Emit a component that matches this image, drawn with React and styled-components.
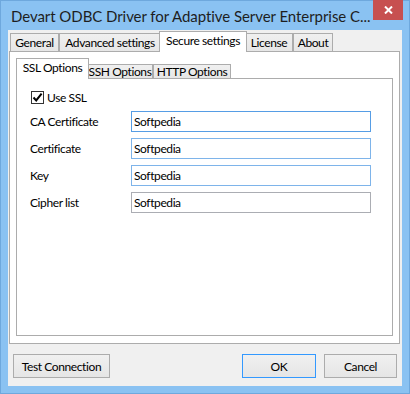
import React from 'react';
import styled, { createGlobalStyle, css } from 'styled-components';

const UI_FONT = `Lato, 'Noto Sans', sans-serif`;

const GlobalStyle = createGlobalStyle`
  html, body {
    margin: 0;
    padding: 0;
    background: #ffffff;
  }
  body {
    font-family: ${UI_FONT};
    font-size: 12px;
    letter-spacing: -0.4px;
  }
`;

const Window = styled.div`
  width: 410px;
  height: 394px;
  box-sizing: border-box;
  background: #8ac2f2;
  border: 1px solid #6ea8dd;
  display: flex;
  flex-direction: column;
`;

const TitleBar = styled.div`
  height: 29px;
  flex-shrink: 0;
  display: flex;
  align-items: flex-start;
`;

const Title = styled.div`
  padding: 5px 0 0 10px;
  font-size: 15px;
  line-height: 20px;
  letter-spacing: -0.06px;
  color: #1e1e1e;
  white-space: nowrap;
`;

const CloseButton = styled.button`
  margin: -1px 6px 0 auto;
  width: 30px;
  height: 20px;
  padding: 0;
  border: 0;
  background: #c75050;
  display: flex;
  align-items: center;
  justify-content: center;
`;

const Client = styled.div`
  flex: 1;
  margin: 0 7px 7px;
  padding: 1px 2px 0 1px;
  background: #f0f0f0;
  display: flex;
  flex-direction: column;
  min-height: 0;
`;

const TabStrip = styled.div`
  height: 20px;
  flex-shrink: 0;
  padding-left: ${(p) => p.$indent}px;
  display: flex;
  align-items: flex-end;
`;

const Tab = styled.div`
  box-sizing: border-box;
  width: ${(p) => p.$w}px;
  height: ${(p) => p.$h}px;
  border: 1px solid #acacac;
  border-bottom: 0;
  background: linear-gradient(#f0f0f0, #e6e6e6);
  line-height: 12px;
  color: #000;
  display: flex;
  align-items: center;
  justify-content: center;
  white-space: nowrap;

  ${(p) =>
    p.$active &&
    css`
      height: 21px;
      margin: 0 -2px -1px;
      padding-bottom: 2px;
      background: #ffffff;
      position: relative;
      z-index: 2;
    `}
`;

const Panel = styled.div`
  flex: 1;
  min-height: 0;
  background: #ffffff;
  border: 1px solid #acacac;
  padding: ${(p) => p.$pad};
  display: flex;
  flex-direction: column;
`;

const Form = styled.div`
  padding: 12px 0 0 13px;
  display: flex;
  flex-direction: column;
  gap: 6px;
`;

const CheckRow = styled.label`
  display: flex;
  align-items: center;
  gap: 3px;
  margin: 0 0 1px 1px;
  height: 13px;
  color: #000;
`;

const CheckBox = styled.span`
  box-sizing: border-box;
  width: 13px;
  height: 13px;
  border: 1px solid #333333;
  background: #ffffff;
  display: flex;
  align-items: center;
  justify-content: center;
`;

const FieldRow = styled.div`
  display: flex;
  align-items: center;
  height: 21px;
`;

const Label = styled.span`
  width: 101px;
  color: #000;
`;

const borderTones = {
  focus: '#569de5',
  hover: '#7eb4ea',
  normal: '#abadb3',
};

const TextBox = styled.input`
  box-sizing: border-box;
  width: 240px;
  height: 21px;
  margin: 0;
  padding: 0 2px;
  border: 1px solid ${(p) => borderTones[p.$tone]};
  background: #ffffff;
  font-family: ${UI_FONT};
  font-size: 12px;
  letter-spacing: -0.4px;
  color: #000;
  outline: none;
`;

const ButtonBar = styled.div`
  flex-shrink: 0;
  display: flex;
  align-items: center;
  gap: 8px;
  padding: 10px 3px 8px 4px;
`;

const Button = styled.button`
  box-sizing: border-box;
  width: ${(p) => p.$w}px;
  height: 24px;
  padding: 0;
  border: 1px solid ${(p) => (p.$default ? '#3399ff' : '#acacac')};
  background: linear-gradient(#f0f0f0, #e5e5e5);
  font-family: ${UI_FONT};
  font-size: 12px;
  letter-spacing: -0.4px;
  color: #000;
  ${(p) => p.$push && 'margin-left: auto;'}
`;

const mainTabs = [
  { name: 'General', w: 49 },
  { name: 'Advanced settings', w: 102 },
  { name: 'Secure settings', w: 88, active: true },
  { name: 'License', w: 48 },
  { name: 'About', w: 40 },
];

const sslTabs = [
  { name: 'SSL Options', w: 73, active: true },
  { name: 'SSH Options', w: 66 },
  { name: 'HTTP Options', w: 78 },
];

const fields = [
  { label: 'CA Certificate', tone: 'focus' },
  { label: 'Certificate', tone: 'hover' },
  { label: 'Key', tone: 'hover' },
  { label: 'Cipher list', tone: 'normal' },
];

function CheckMark() {
  return (
    <svg width="11" height="11" viewBox="0 0 11 11">
      <path d="M1.5 5.5 L4.2 8.4 L9.6 1.6" fill="none" stroke="#000" strokeWidth="2" />
    </svg>
  );
}

export default function App() {
  return (
    <>
      <GlobalStyle />
      <Window>
        <TitleBar>
          <Title>Devart ODBC Driver for Adaptive Server Enterprise C...</Title>
          <CloseButton aria-label="Close">
            <svg width="9" height="8" viewBox="0 0 9 8">
              <path d="M1 0.5 L8 7.5 M8 0.5 L1 7.5" stroke="#fff" strokeWidth="2" />
            </svg>
          </CloseButton>
        </TitleBar>
        <Client>
          <TabStrip $indent={1}>
            {mainTabs.map((t) => (
              <Tab key={t.name} $w={t.w} $h={18} $active={t.active}>
                {t.name}
              </Tab>
            ))}
          </TabStrip>
          <Panel $pad="6px 6px 7px 6px">
            <TabStrip $indent={2}>
              {sslTabs.map((t) => (
                <Tab key={t.name} $w={t.w} $h={14} $active={t.active}>
                  {t.name}
                </Tab>
              ))}
            </TabStrip>
            <Panel $pad="0">
              <Form>
                <CheckRow>
                  <CheckBox>
                    <CheckMark />
                  </CheckBox>
                  Use SSL
                </CheckRow>
                {fields.map((f) => (
                  <FieldRow key={f.label}>
                    <Label>{f.label}</Label>
                    <TextBox $tone={f.tone} value="Softpedia" readOnly />
                  </FieldRow>
                ))}
              </Form>
            </Panel>
          </Panel>
          <ButtonBar>
            <Button $w={97}>Test Connection</Button>
            <Button $w={74} $default $push>
              OK
            </Button>
            <Button $w={73}>Cancel</Button>
          </ButtonBar>
        </Client>
      </Window>
    </>
  );
}
